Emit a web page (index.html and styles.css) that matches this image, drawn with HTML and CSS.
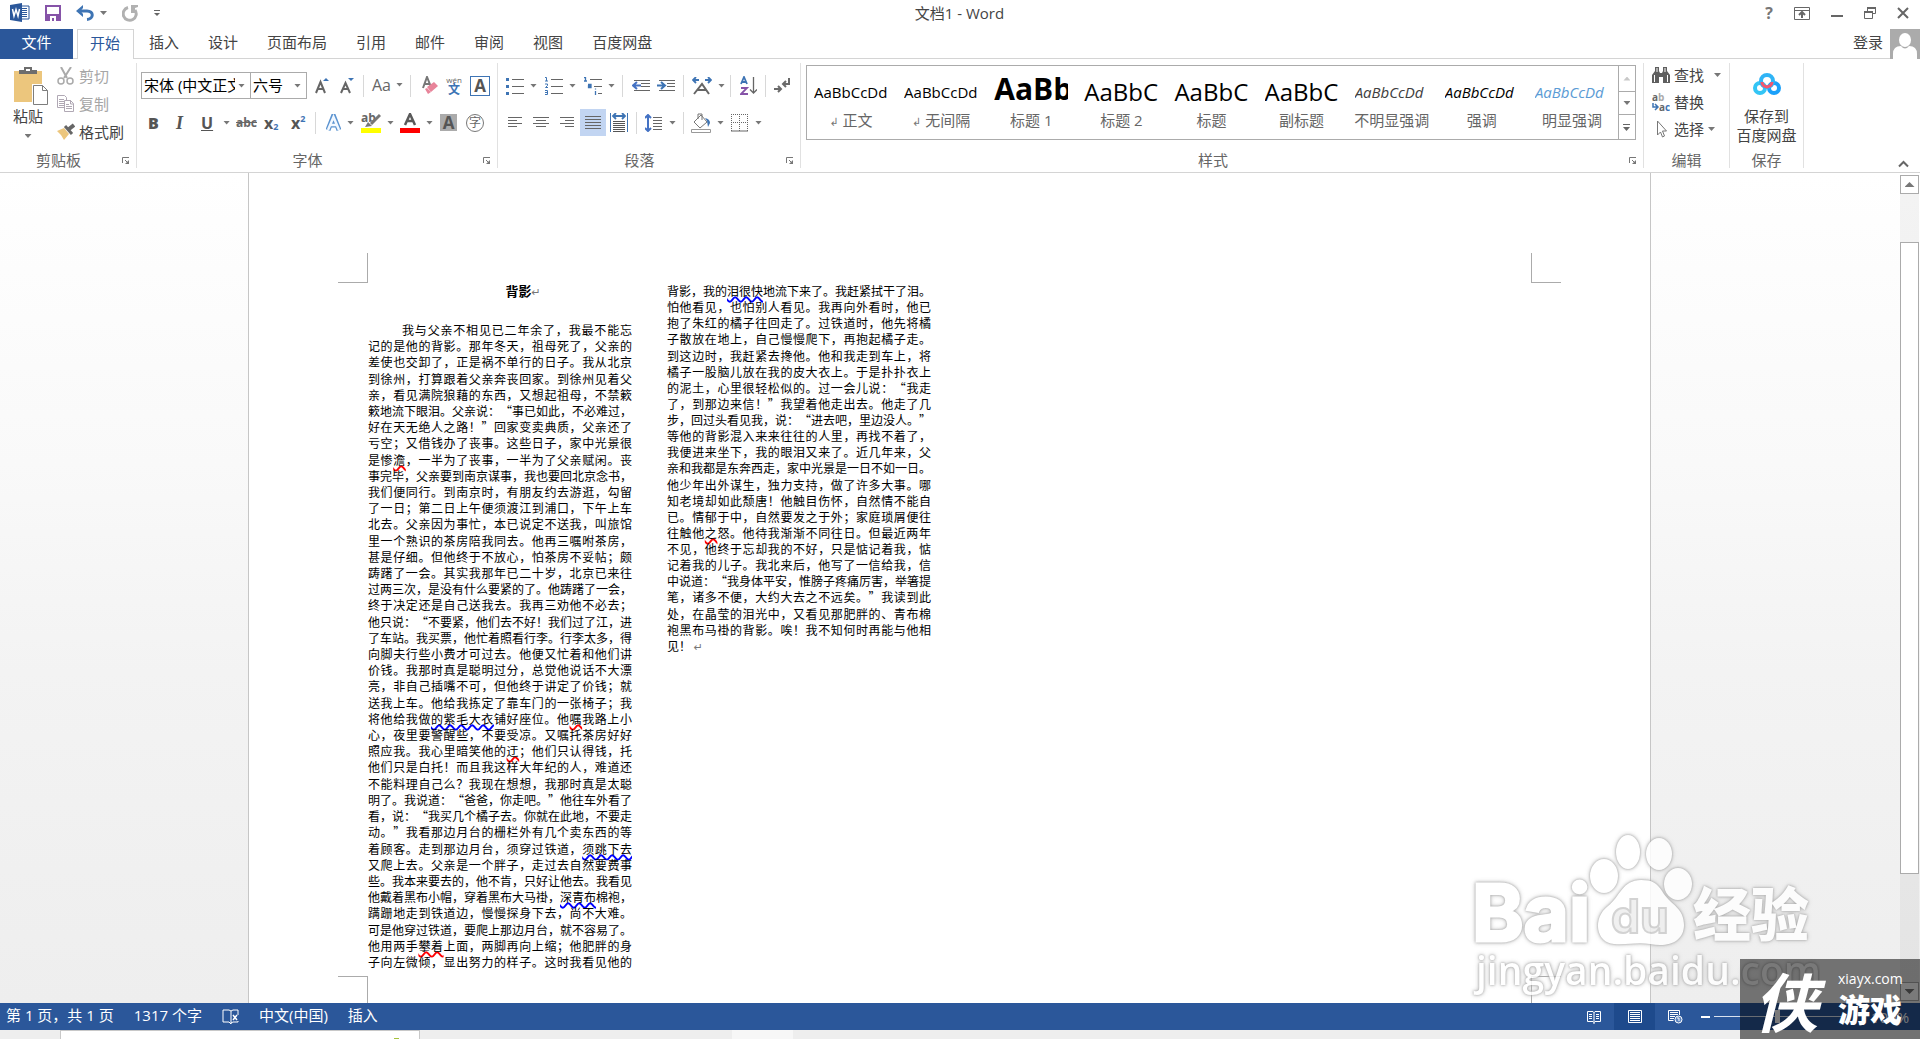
FILE: index.html
```html
<!DOCTYPE html>
<html lang="zh-CN">
<head>
<meta charset="utf-8">
<title>文档1 - Word</title>
<link rel="stylesheet" href="styles.css">
</head>
<body>
<header class="titlebar">
  <div class="quick">
    <svg width="20" height="20" viewBox="0 0 20 20"><path d="M11 3h8v13h-8z" fill="#fff" stroke="#2b579a"/><path d="M12 5.500h5M12 7.500h5M12 9.500h5M12 11.500h5M12 13.500h5" stroke="#2b579a"/><path d="M0 2l12-2v19L0 17z" fill="#2b579a"/><path d="M2.500 6l1.500 7 2-6.500 2 6.500 1.500-7" fill="none" stroke="#fff" stroke-width="1.500"/></svg>
    <button class="tool" aria-label="保存"><svg width="16" height="16" viewBox="0 0 16 16"><path d="M1 1h14v14H1z" fill="none" stroke="#8653a8" stroke-width="2"/><path d="M1 9h14v6H1z" fill="#8653a8"/><path d="M5 11h6v5H5z" fill="#fff"/><path d="M7 13h2v3H7z" fill="#8653a8"/></svg></button>
    <button class="tool" aria-label="撤消"><svg width="18" height="16" viewBox="0 0 18 16"><path d="M3 6h8c7 0 7 8 0 8.500" fill="none" stroke="#3e74b4" stroke-width="3"/><path d="M0 6l7-6v3L4.500 6 7 9v3z" fill="#3e74b4"/></svg><i class="caret"></i></button>
    <button class="tool" aria-label="恢复"><svg width="17" height="17" viewBox="0 0 17 17"><path d="M6 2.500A6.500 6.500 0 1 0 13 5" fill="none" stroke="#b1b1b1" stroke-width="3"/><path d="M9 0h7v2l-3 1v5H9z" fill="#b1b1b1"/></svg></button>
    <button class="tool" aria-label="自定义快速访问工具栏"><svg width="6" height="7" viewBox="0 0 6 7"><path d="M0 .5h6" stroke="#666"/><path d="M0 3h6L3 6z" fill="#666"/></svg></button>
  </div>
  <h1>文档1 - Word</h1>
  <div class="window">
    <button class="tool help" aria-label="帮助">?</button>
    <button class="tool" aria-label="功能区显示选项"><svg width="16" height="13" viewBox="0 0 16 13"><path d="M.5.500h15v12H.5zM.5 3.500h15" fill="none" stroke="#666"/><path d="M8 11V5M5 8l3-3 3 3" fill="none" stroke="#666" stroke-width="2"/></svg></button>
    <button class="tool" aria-label="最小化"><svg width="12" height="12" viewBox="0 0 12 12"><path d="M0 9h12" stroke="#666" stroke-width="2"/></svg></button>
    <button class="tool" aria-label="还原"><svg width="12" height="12" viewBox="0 0 12 12"><path d="M3.500 4V.5h8v6H8.500M.5 4.500h8v7h-8z" fill="none" stroke="#666"/><path d="M3 1h9M0 5h9" stroke="#666" stroke-width="2"/></svg></button>
    <button class="tool" aria-label="关闭"><svg width="12" height="12" viewBox="0 0 12 12"><path d="M1 1l10 10M11 1L1 11" stroke="#666" stroke-width="2"/></svg></button>
  </div>
</header>
<nav class="tabs">
  <button class="file">文件</button>
  <button class="tab active">开始</button>
  <button class="tab">插入</button>
  <button class="tab">设计</button>
  <button class="tab">页面布局</button>
  <button class="tab">引用</button>
  <button class="tab">邮件</button>
  <button class="tab">审阅</button>
  <button class="tab">视图</button>
  <button class="tab">百度网盘</button>
  <a class="login" href="#">登录</a>
  <svg width="30" height="30" viewBox="0 0 30 30"><path d="M0 0h30v30H0z" fill="#ababab"/><ellipse cx="15" cy="11" rx="6" ry="7" fill="#fff"/><path d="M3 30v-5q0-8 8-8 4 5 8 0 8 0 8 8v5z" fill="#fff"/></svg>
</nav>

<section class="ribbon">
  <div class="group">
    <div class="clipboard">
      <button class="big">
        <svg width="36" height="39" viewBox="0 0 36 39"><path d="M1 4h28v31H1z" fill="#ecc67d"/><path d="M6 7V3h5V0h8v3h5v4z" fill="#6d6d6d"/><path d="M13 2h4v2h-4z" fill="#fff"/><path d="M19 17h17v22H19z" fill="#fff"/><path d="M20.500 18.500h9l5 5v14h-14z" fill="#fff" stroke="#7d7d7d"/><path d="M29.500 18.500v5h5" fill="none" stroke="#7d7d7d"/></svg>
        <span>粘贴</span><i class="caret"></i>
      </button>
      <div class="stack">
        <button class="item off"><svg width="18" height="18" viewBox="0 0 18 18"><path d="M4 0l6 11M14 0L7 11" stroke="#aaa" stroke-width="2"/><circle cx="4" cy="14" r="3" fill="none" stroke="#aaa" stroke-width="1.500"/><circle cx="13" cy="14" r="3" fill="none" stroke="#aaa" stroke-width="1.500"/></svg>剪切</button>
        <button class="item off"><svg width="18" height="18" viewBox="0 0 18 18"><path d="M.5.500h7l2 2v10h-9z" fill="#fff" stroke="#b0a8b4"/><path d="M2 4.500h5M2 6.500h5M2 8.500h5M2 10.500h5" stroke="#b0a8b4"/><path d="M7.500 5.500h6l3 3v8h-9z" fill="#fff" stroke="#b0a8b4"/><path d="M13.500 5v4h3M9 9.500h3M9 11.500h6M9 13.500h6" fill="none" stroke="#b0a8b4"/></svg>复制</button>
        <button class="item"><svg width="18" height="18" viewBox="0 0 18 18"><path d="M0 8l7-3 5 6-5 6q-2-5-7-9" fill="#ecc67d"/><path d="M8 3l7 8" stroke="#666" stroke-width="3"/><path d="M12 6l5-4" stroke="#666" stroke-width="4"/></svg>格式刷</button>
      </div>
    </div>
    <footer><span>剪贴板</span><svg class="launch" width="8" height="8" viewBox="0 0 8 8"><path d="M.5 6V.5H7" fill="none" stroke="#777"/><path d="M3 3l3 3" stroke="#777"/><path d="M7 3v4H3z" fill="#777"/></svg></footer>
  </div>

  <div class="group">
    <div class="rows">
      <div class="row font-top">
        <span class="combo"><select aria-label="字体"><option>宋体 (中文正文)</option></select><i class="caret"></i></span>
        <span class="combo size"><select aria-label="字号"><option>六号</option></select><i class="caret"></i></span>
        <button class="tool" aria-label="增大字号"><svg width="15" height="18" viewBox="0 0 15 18"><path d="M1 16L5.500 5 10 16M3 12h5" fill="none" stroke="#666" stroke-width="2"/><path d="M8 4h6l-3-3z" fill="#3e74b4"/></svg></button>
        <button class="tool" aria-label="减小字号"><svg width="15" height="18" viewBox="0 0 15 18"><path d="M1 16L5.500 6 10 16M3 12h5" fill="none" stroke="#666" stroke-width="2"/><path d="M8 1h6l-3 3z" fill="#3e74b4"/></svg></button>
        <i class="sep"></i>
        <button class="tool latin">Aa<i class="caret"></i></button>
        <i class="sep"></i>
        <button class="tool" aria-label="清除格式"><svg width="16" height="19" viewBox="0 0 16 19"><path d="M1 12L5 1l4 10M2 8h6" fill="none" stroke="#777" stroke-width="2"/><path d="M5 11l7-5 4 4-7 6z" fill="#e8849a"/><path d="M3 13l2-1 4 4-3 2z" fill="#e8849a"/></svg></button>
        <button class="tool pinyin" aria-label="拼音指南"><span>wén</span><b>文</b></button>
        <button class="tool boxed">A</button>
      </div>
      <div class="row font-bottom">
        <button class="tool glyph"><b>B</b></button>
        <button class="tool glyph serif"><em>I</em></button>
        <button class="tool glyph"><u>U</u><i class="caret"></i></button>
        <button class="tool strike"><s>abc</s></button>
        <button class="tool script">x<sub>2</sub></button>
        <button class="tool script">x<sup>2</sup></button>
        <i class="sep"></i>
        <button class="tool" aria-label="文本效果"><svg width="15" height="18" viewBox="0 0 15 18"><path d="M2 16L7.500 2 13 16M4 11h7" fill="none" stroke="#5b93d0" stroke-width="5"/><path d="M2 16L7.500 3 13 16M4 11h7" fill="none" stroke="#f2f8ff" stroke-width="2.500"/></svg><i class="caret"></i></button>
        <button class="tool" aria-label="突出显示"><svg width="20" height="20" viewBox="0 0 20 20"><text x="0" y="9" class="ab">ab</text><path d="M19 2L10 11" stroke="#777" stroke-width="3"/><path d="M4 14l3-5 4 4z" fill="#777"/><path d="M0 15h20v5H0z" fill="#ff0"/></svg><i class="caret"></i></button>
        <button class="tool" aria-label="字体颜色"><svg width="20" height="20" viewBox="0 0 20 20"><path d="M5 12L10 1l5 11M7 8h6" fill="none" stroke="#5a5a5a" stroke-width="2.500"/><path d="M0 15h20v5H0z" fill="red"/></svg><i class="caret"></i></button>
        <button class="tool shaded">A</button>
        <button class="tool ring">字</button>
      </div>
    </div>
    <footer><span>字体</span><svg class="launch" width="8" height="8" viewBox="0 0 8 8"><path d="M.5 6V.5H7" fill="none" stroke="#777"/><path d="M3 3l3 3" stroke="#777"/><path d="M7 3v4H3z" fill="#777"/></svg></footer>
  </div>

  <div class="group">
    <div class="rows">
      <div class="row para-top">
        <button class="tool" aria-label="项目符号"><svg width="18" height="18" viewBox="0 0 18 18"><path d="M6 2.500h12M6 9.500h12M6 16.500h12" stroke="#666"/><path d="M0 1h3v3H0zM0 8h3v3H0zM0 15h3v3H0z" fill="#3e74b4"/></svg><i class="caret"></i></button>
        <button class="tool" aria-label="编号"><svg width="18" height="18" viewBox="0 0 18 18"><path d="M6 2.500h12M6 9.500h12M6 16.500h12" stroke="#666"/><path d="M0 .5h1.500V4M0 4h3M0 7h2.500v1.500L.5 10.500H3M0 13.500h2.500v4H0M0 15.500h2" fill="none" stroke="#3e74b4"/></svg><i class="caret"></i></button>
        <button class="tool" aria-label="多级列表"><svg width="18" height="18" viewBox="0 0 18 18"><path d="M6 2.500h12M10 9.500h8M14 16.500h4" stroke="#666"/><path d="M0 .5h1.500V4M0 4h3M4 7.500h3v3H4.500V9H7M11.500 14v4M11.500 11.500v1" fill="none" stroke="#3e74b4" stroke-width="1.300"/></svg><i class="caret"></i></button>
        <i class="sep"></i>
        <button class="tool" aria-label="减少缩进量"><svg width="18" height="12" viewBox="0 0 18 12"><path d="M2 .5h16M9 3.500h9M9 6.500h9M2 10.500h16" stroke="#666"/><path d="M2 5.500h7M5 2L1 5.500 5 9" fill="none" stroke="#4472c4" stroke-width="2"/></svg></button>
        <button class="tool" aria-label="增加缩进量"><svg width="18" height="12" viewBox="0 0 18 12"><path d="M2 .5h16M10 3.500h8M10 6.500h8M2 10.500h16" stroke="#666"/><path d="M0 5.500h7M4 2l4 3.500L4 9" fill="none" stroke="#3e74b4" stroke-width="2"/></svg></button>
        <i class="sep"></i>
        <button class="tool" aria-label="中文版式"><svg width="20" height="18" viewBox="0 0 20 18"><path d="M2 17l8-10 7 10M5 13h9" fill="none" stroke="#666" stroke-width="2"/><path d="M1 3h6M4 0L1 3l3 3M19 3h-6M16 0l3 3-3 3" fill="none" stroke="#3e74b4" stroke-width="1.800"/></svg><i class="caret"></i></button>
        <i class="sep"></i>
        <button class="tool" aria-label="排序"><svg width="17" height="19" viewBox="0 0 17 19"><path d="M1 8l3-7 3 7M2 6h4" fill="none" stroke="#3e74b4" stroke-width="1.800"/><path d="M1 12h6l-6 6h7" fill="none" stroke="#8653a8" stroke-width="1.800"/><path d="M13.500 1v16M10 13.500l3.500 3.500 3.500-3.500" fill="none" stroke="#666" stroke-width="1.300"/></svg></button>
        <i class="sep"></i>
        <button class="tool" aria-label="显示编辑标记"><svg width="17" height="15" viewBox="0 0 17 15"><path d="M15 0v6H9M12 3L9 6l3 3M0 11h7M4 8l3 3-3 3" fill="none" stroke="#6a6a6a" stroke-width="2"/></svg></button>
      </div>
      <div class="row para-bottom">
        <button class="tool" aria-label="左对齐"><svg width="16" height="12" viewBox="0 0 16 12"><path d="M1 .5h14M1 3.500h9M1 6.500h14M1 9.500h9" stroke="#666"/></svg></button>
        <button class="tool" aria-label="居中"><svg width="16" height="12" viewBox="0 0 16 12"><path d="M0 .5h16M3 3.500h10M0 6.500h16M3 9.500h10" stroke="#666"/></svg></button>
        <button class="tool" aria-label="右对齐"><svg width="17" height="12" viewBox="0 0 17 12"><path d="M3 .5h14M8 3.500h9M3 6.500h14M8 9.500h9" stroke="#666"/></svg></button>
        <button class="tool chosen" aria-label="两端对齐"><svg width="16" height="14" viewBox="0 0 16 14"><path d="M0 .5h16M0 3.500h16M0 6.500h16M0 9.500h16M0 12.500h16" stroke="#666"/></svg></button>
        <button class="tool" aria-label="分散对齐"><svg width="18" height="19" viewBox="0 0 18 19"><path d="M.5 0v19M17.500 0v19" stroke="#3e74b4"/><path d="M3 3h12M6 0L3 3l3 3M12 0l3 3-3 3" fill="none" stroke="#3e74b4" stroke-width="1.800"/><path d="M3 8.500h12M3 10.500h12M3 12.500h12M3 14.500h12M3 16.500h12M3 18.500h12" stroke="#555"/></svg></button>
        <i class="sep"></i>
        <button class="tool" aria-label="行距"><svg width="18" height="18" viewBox="0 0 18 18"><path d="M8 3.500h9M8 6.500h9M8 9.500h9M8 12.500h9M8 15.500h9" stroke="#666"/><path d="M3 1v16M0 4l3-3 3 3M0 14l3 3 3-3" fill="none" stroke="#4472c4" stroke-width="2"/></svg><i class="caret"></i></button>
        <i class="sep"></i>
        <button class="tool" aria-label="底纹"><svg width="20" height="20" viewBox="0 0 20 20"><path d="M3 9l7-7 6 7-7 6z" fill="#fff" stroke="#777"/><path d="M7 6V1h4v6" fill="none" stroke="#777"/><path d="M14 5q5 1 5 5l-2 4-1-6z" fill="#3e74b4"/><path d="M.5 16.500h19v3H.5z" fill="#fff" stroke="#999"/></svg><i class="caret"></i></button>
        <button class="tool" aria-label="边框"><svg width="18" height="18" viewBox="0 0 18 18"><path d="M.5 0v17M8.500 0v17M16.500 0v17M0 .5h17M0 8.500h17" stroke="#666" stroke-dasharray="1 1"/><path d="M0 17h17" stroke="#666"/></svg><i class="caret"></i></button>
      </div>
    </div>
    <footer><span>段落</span><svg class="launch" width="8" height="8" viewBox="0 0 8 8"><path d="M.5 6V.5H7" fill="none" stroke="#777"/><path d="M3 3l3 3" stroke="#777"/><path d="M7 3v4H3z" fill="#777"/></svg></footer>
  </div>

  <div class="group styles">
    <div class="gallery">
      <button class="style"><span>AaBbCcDd</span><small><i class="mark">↲</i> 正文</small></button>
      <button class="style"><span>AaBbCcDd</span><small><i class="mark">↲</i> 无间隔</small></button>
      <button class="style h1"><span>AaBb</span><small>标题 1</small></button>
      <button class="style h2"><span>AaBbC</span><small>标题 2</small></button>
      <button class="style h2"><span>AaBbC</span><small>标题</small></button>
      <button class="style h2"><span>AaBbC</span><small>副标题</small></button>
      <button class="style em soft"><span>AaBbCcDd</span><small>不明显强调</small></button>
      <button class="style em"><span>AaBbCcDd</span><small>强调</small></button>
      <button class="style em blue"><span>AaBbCcDd</span><small>明显强调</small></button>
      <div class="pager">
        <button aria-label="上一行" class="dim"><i class="caret up"></i></button>
        <button aria-label="下一行"><i class="caret"></i></button>
        <button aria-label="其他"><svg width="7" height="7" viewBox="0 0 7 7"><path d="M0 .5h7" stroke="#666"/><path d="M0 3h7L3.500 7z" fill="#666"/></svg></button>
      </div>
    </div>
    <footer><span>样式</span><svg class="launch" width="8" height="8" viewBox="0 0 8 8"><path d="M.5 6V.5H7" fill="none" stroke="#777"/><path d="M3 3l3 3" stroke="#777"/><path d="M7 3v4H3z" fill="#777"/></svg></footer>
  </div>

  <div class="group plain">
    <div class="stack">
      <button class="item"><svg width="18" height="18" viewBox="0 0 18 18"><path d="M0 9l3-4V1h4v4l1 2h2l1-2V1h4v4l3 4v8h-7v-6H7v6H0z" fill="#5f5f5f"/><path d="M2.500 9v7M15.500 9v7M5 2v4M13 2v4" stroke="#fff"/></svg>查找<i class="caret wide"></i></button>
      <button class="item"><svg width="18" height="19" viewBox="0 0 18 19"><text x="0" y="8" class="ab small">a<tspan fill="#aaa">b</tspan></text><text x="7" y="18" class="ab small">a<tspan fill="#3e74b4">c</tspan></text><path d="M1 10v4h5M3 11l3 3-3 3" fill="none" stroke="#3e74b4" stroke-width="1.500"/></svg>替换</button>
      <button class="item"><svg width="18" height="18" viewBox="0 0 18 18"><path d="M5.500 1v14l3-3 2 5 2-1-2-5h4z" fill="#fff" stroke="#777"/></svg>选择<i class="caret"></i></button>
    </div>
    <footer><span>编辑</span></footer>
  </div>

  <div class="group plain save">
    <button class="big">
      <svg width="28" height="22" viewBox="0 0 28 22"><circle cx="7" cy="15" r="5" fill="none" stroke="#33c5f5" stroke-width="4"/><circle cx="21" cy="15" r="5" fill="none" stroke="#1aa0fa" stroke-width="4"/><circle cx="14" cy="8" r="6" fill="none" stroke="#2fb4f6" stroke-width="4"/><path d="M9 9q0 4 5 5 5-1 5-5" fill="none" stroke="#f4566e" stroke-width="3"/></svg>
      <span>保存到<br>百度网盘</span>
    </button>
    <footer><span>保存</span></footer>
  </div>
  <button class="tool collapse" aria-label="折叠功能区"><svg width="11" height="8" viewBox="0 0 11 8"><path d="M1 6.500L5.500 2 10 6.500" fill="none" stroke="#666" stroke-width="2"/></svg></button>
</section>

<main class="desk">
  <article class="page">
    <div class="frame">
      <i class="corner tl"></i><i class="corner tr"></i><i class="corner bl"></i><i class="corner br"></i>
      <div class="column">
        <h2>背影<i class="mark">↵</i></h2>
        <p class="lines first">
          <span class="indent">我与父亲不相见已二年余了，我最不能忘</span>
          <span>记的是他的背影。那年冬天，祖母死了，父亲的</span>
          <span>差使也交卸了，正是祸不单行的日子。我从北京</span>
          <span>到徐州，打算跟着父亲奔丧回家。到徐州见着父</span>
          <span>亲，看见满院狼藉的东西，又想起祖母，不禁簌</span>
          <span>簌地流下眼泪。父亲说：“事已如此，不必难过，</span>
          <span>好在天无绝人之路！”回家变卖典质，父亲还了</span>
          <span>亏空；又借钱办了丧事。这些日子，家中光景很</span>
          <span>是惨<u class="spell">澹</u>，一半为了丧事，一半为了父亲赋闲。丧</span>
          <span>事完毕，父亲要到南京谋事，我也要回北京念书，</span>
          <span>我们便同行。到南京时，有朋友约去游逛，勾留</span>
          <span>了一日；第二日上午便须渡江到浦口，下午上车</span>
          <span>北去。父亲因为事忙，本已说定不送我，叫旅馆</span>
          <span>里一个熟识的茶房陪我同去。他再三嘱咐茶房，</span>
          <span>甚是仔细。但他终于不放心，怕茶房不妥帖；颇</span>
          <span>踌躇了一会。其实我那年已二十岁，北京已来往</span>
          <span>过两三次，是没有什么要紧的了。他踌躇了一会，</span>
          <span>终于决定还是自己送我去。我再三劝他不必去；</span>
          <span>他只说：“不要紧，他们去不好！我们过了江，进</span>
          <span>了车站。我买票，他忙着照看行李。行李太多，得</span>
          <span>向脚夫行些小费才可过去。他便又忙着和他们讲</span>
          <span>价钱。我那时真是聪明过分，总觉他说话不大漂</span>
          <span>亮，非自己插嘴不可，但他终于讲定了价钱；就</span>
          <span>送我上车。他给我拣定了靠车门的一张椅子；我</span>
          <span>将他给我做<u class="grammar">的紫毛大衣</u>铺好座位。他<u class="spell">嘱</u>我路上小</span>
          <span>心，夜里要警醒些，不要受凉。又嘱托茶房好好</span>
          <span>照应我。我心里暗笑他的<u class="spell">迂</u>；他们只认得钱，托</span>
          <span>他们只是白托！而且我这样大年纪的人，难道还</span>
          <span>不能料理自己么？我现在想想，我那时真是太聪</span>
          <span>明了。我说道：“爸爸，你走吧。”他往车外看了</span>
          <span>看，说：“我买几个橘子去。你就在此地，不要走</span>
          <span>动。”我看那边月台的栅栏外有几个卖东西的等</span>
          <span>着顾客。走到那边月台，须穿过铁道，<u class="grammar">须跳下去</u></span>
          <span>又爬上去。父亲是一个胖子，走过去自然要费事</span>
          <span>些。我本来要去的，他不肯，只好让他去。我看见</span>
          <span>他戴着黑布小帽，穿着黑布大马褂，<u class="grammar">深青布</u>棉袍，</span>
          <span>蹒跚地走到铁道边，慢慢探身下去，尚不大难。</span>
          <span>可是他穿过铁道，要爬上那边月台，就不容易了。</span>
          <span>他用两手<u class="spell">攀着</u>上面，两脚再向上缩；他肥胖的身</span>
          <span>子向左微倾，显出努力的样子。这时我看见他的</span>
        </p>
      </div>
      <div class="column">
        <p class="lines second">
          <span>背影，我的<u class="grammar">泪很快</u>地流下来了。我赶紧拭干了泪。</span>
          <span>怕他看见，也怕别人看见。我再向外看时，他已</span>
          <span>抱了朱红的橘子往回走了。过铁道时，他先将橘</span>
          <span>子散放在地上，自己慢慢爬下，再抱起橘子走。</span>
          <span>到这边时，我赶紧去搀他。他和我走到车上，将</span>
          <span>橘子一股脑儿放在我的皮大衣上。于是扑扑衣上</span>
          <span>的泥土，心里很轻松似的。过一会儿说：“我走</span>
          <span>了，到那边来信！”我望着他走出去。他走了几</span>
          <span>步，回过头看见我，说：“进去吧，里边没人。”</span>
          <span>等他的背影混入来来往往的人里，再找不着了，</span>
          <span>我便进来坐下，我的眼泪又来了。近几年来，父</span>
          <span>亲和我都是东奔西走，家中光景是一日不如一日。</span>
          <span>他少年出外谋生，独力支持，做了许多大事。哪</span>
          <span>知老境却如此颓唐！他触目伤怀，自然情不能自</span>
          <span>已。情郁于中，自然要发之于外；家庭琐屑便往</span>
          <span>往触他<u class="spell">之</u>怒。他待我渐渐不同往日。但最近两年</span>
          <span>不见，他终于忘却我的不好，只是惦记着我，惦</span>
          <span>记着我的儿子。我北来后，他写了一信给我，信</span>
          <span>中说道：“我身体平安，惟膀子疼痛厉害，举箸提</span>
          <span>笔，诸多不便，大约大去之不远矣。”我读到此</span>
          <span>处，在晶莹的泪光中，又看见那肥胖的、青布棉</span>
          <span>袍黑布马褂的背影。唉！我不知何时再能与他相</span>
          <span class="end">见！ <i class="mark">↵</i></span>
        </p>
      </div>
    </div>
  </article>
  <div class="scroll">
    <button aria-label="向上滚动"><i class="caret up big-caret"></i></button>
    <div class="track"><div class="thumb"></div></div>
    <button aria-label="向下滚动"><i class="caret big-caret"></i></button>
  </div>
</main>

<footer class="status">
  <span>第 1 页，共 1 页</span>
  <span>1317 个字</span>
  <svg width="17" height="16" viewBox="0 0 17 16"><path d="M9 2L7 1H1v12h6l2 2V2l2-1h5v5M9 14l2-1h5v-1" fill="none" stroke="#fff"/><path d="M11 6l4 5M15 6l-4 5" stroke="#fff" stroke-width="1.500"/></svg>
  <span>中文(中国)</span>
  <span>插入</span>
  <div class="views">
    <button class="view" aria-label="阅读视图"><svg width="14" height="14" viewBox="0 0 14 14"><path d="M.5 1.500H6l1 1 1-1h5.500v10H8l-1 1-1-1H.5zM7 2v12M2 4.500h3M2 6.500h3M2 8.500h3M9 4.500h3M9 6.500h3M9 8.500h3" fill="none" stroke="#fff"/></svg></button>
    <button class="view on" aria-label="页面视图"><svg width="14" height="14" viewBox="0 0 14 14"><path d="M.5.500h13v12H.5zM2 2.500h10M2 4.500h10M2 6.500h10M2 8.500h10M2 10.500h10" fill="none" stroke="#fff"/></svg></button>
    <button class="view" aria-label="Web 版式视图"><svg width="15" height="14" viewBox="0 0 15 14"><path d="M11.500 5V.5H.5v10h5M2 2.500h8M2 4.500h8M2 6.500h5M2 8.500h4" fill="none" stroke="#fff"/><circle cx="10.500" cy="9.500" r="3.500" fill="#5b83bd" stroke="#fff"/><path d="M9 8h2v3" stroke="#fff" fill="none"/></svg></button>
    <button class="minus" aria-label="缩小"><i></i></button>
    <input type="range" aria-label="缩放" min="0" max="100" value="49">
    <span class="percent">100%</span>
  </div>
</footer>
<div class="taskbar"><div class="window-tab"><i></i></div><div class="task-light"></div></div>

<div class="watermark">
  <svg width="350" height="170" viewBox="0 0 350 170">
    <g class="ghost">
      <text x="2" y="110" class="bai">Bai</text>
      <ellipse cx="134" cy="45" rx="14" ry="17"/><ellipse cx="158" cy="21" rx="12" ry="17"/><ellipse cx="189" cy="23" rx="13" ry="16"/><ellipse cx="208" cy="53" rx="14" ry="16"/>
      <path d="M171 49C152 49 150 66 138 75 122 87 126 112 144 113 158 114 166 111 180 113 199 117 214 110 214 94 214 76 200 74 192 60 187 52 182 49 171 49z"/>
      <text x="223" y="105" class="jy">经验</text>
      <text x="6" y="154" class="url">jingyan.baidu.com</text>
    </g>
    <text x="141" y="102" class="du">du</text>
  </svg>
</div>
<div class="stamp">
  <strong class="xia">侠</strong>
  <div><span>xiayx.com</span><strong>游戏</strong></div>
</div>
</body>
</html>
```
FILE: styles.css
```css
* { box-sizing: border-box; }
body {
  margin: 0;
  height: 100vh;
  display: flex;
  flex-direction: column;
  overflow: hidden;
  background: #fff;
  color: #444;
  font: 15px/20px "Open Sans", "Noto Sans CJK SC", sans-serif;
}
button, select, input { font: inherit; color: inherit; }
button { border: 0; padding: 0; background: none; white-space: nowrap; }
svg { display: block; flex: none; }
i { font-style: normal; }
h1, h2, p { margin: 0; font-weight: normal; }

.caret {
  flex: none;
  width: 7px;
  height: 4px;
  background: #777;
  clip-path: polygon(0 0, 100% 0, 50% 100%);
}
.caret.up { clip-path: polygon(0 100%, 100% 100%, 50% 0); }
.tool { display: flex; align-items: center; gap: 6px; }

/* title bar */
.titlebar {
  flex: none;
  height: 29px;
  display: grid;
  grid-template-columns: 1fr auto 1fr;
  align-items: center;
  padding: 0 11px 3px 10px;
}
.quick, .window { display: flex; align-items: center; gap: 15px; }
.window { justify-content: flex-end; gap: 21px; }
.titlebar h1 { font-size: 15px; }
.help { font-weight: bold; font-size: 16px; color: #777; }

/* tabs */
.tabs { flex: none; height: 30px; display: flex; border-bottom: 1px solid #d4d4d4; }
.tabs .file { width: 73px; height: 30px; margin-right: 4px; background: #2b579a; color: #fff; }
.tab { padding: 0 14px 4px 15px; }
.tabs .file { padding-bottom: 4px; }
.tab.active {
  height: 30px;
  padding: 0 13px 4px 12px;
  border: 1px solid #d4d4d4;
  border-bottom: 0;
  background: #fff;
  color: #2b579a;
}
.login { margin-left: auto; padding: 3px 7px 0 0; color: #444; text-decoration: none; }

/* ribbon */
.ribbon { flex: none; height: 114px; display: flex; padding: 4px 0; border-bottom: 1px solid #d4d4d4; }
.group {
  display: flex;
  flex-direction: column;
  justify-content: space-between;
  border-right: 1px solid #e1e1e1;
  padding-left: 4px;
}
.group footer { display: flex; height: 16px; margin-left: -4px; color: #666; line-height: 16px; align-items: flex-start; }
.group footer span { flex: 1; text-align: center; }
.group .launch { margin: 5px 6px 0 5px; }
.clipboard { display: flex; width: 132px; gap: 8px; }
.big { display: flex; flex-direction: column; align-items: center; }
.clipboard .big { padding: 4px 0 0 9px; }
.clipboard .big span { margin: 0 6px 8px 0; }
.clipboard .big .caret { margin-right: 6px; }
.stack { display: flex; flex-direction: column; }
.item { display: flex; align-items: center; gap: 4px; height: 28px; padding-bottom: 2px; }
.plain .item { height: 27px; padding-bottom: 3px; }
.item.off { color: #a6a6a6; }
.rows { display: flex; flex-direction: column; padding-top: 4px; }
.row { display: grid; align-items: center; height: 37px; }
.row .latin { font-size: 16px; color: #666; gap: 5px; padding-bottom: 2px; }
.font-top { grid-template-columns: 110px 64px 25px 23px 9px 38px 12px 24px 24px 27px; }
.font-bottom { grid-template-columns: 28px 25px 35px 28px 27px 24px 11px 35px 39px 40px 26px 24px; padding-left: 7px; }
.para-top { grid-template-columns: 39px 39px 38px 10px 25px 26px 9px 38px 10px 25px 9px 26px; padding-left: 4px; }
.para-bottom { grid-template-columns: 26px 24px 23px 30px 26px 9px 38px 8px 40px 35px; padding-left: 5px; justify-content: start; }
.sep { width: 1px; height: 22px; background: #d8d8d8; }
.combo { display: flex; align-items: center; height: 27px; border: 1px solid #ababab; padding-right: 5px; }
.combo.size { width: 56px; border-left: 0; }
.combo select {
  flex: 1;
  min-width: 0;
  height: 25px;
  padding: 0 3px 2px 2px;
  border: 0;
  appearance: none;
  background: none;
  color: #000;
  overflow: hidden;
}
.pinyin { flex-direction: column; gap: 0; color: #666; font-size: 8px; line-height: 8px; width: 16px; }
.pinyin b { font-size: 12px; line-height: 12px; color: #3e74b4; }
.boxed, .shaded { justify-content: center; width: 20px; height: 20px; border: 1px solid #3e74b4; font-weight: bold; font-size: 17px; color: #555; }
.shaded { width: 17px; height: 17px; border: 0; background: #ababab; }
.ring { justify-content: center; width: 18px; height: 18px; border: 1px solid #777; border-radius: 50%; font-size: 12px; color: #666; }
.glyph { font-weight: bold; font-size: 16px; color: #555; gap: 10px; }
.serif { font-family: "Liberation Serif", serif; font-size: 18px; }
.strike { font-size: 12px; font-weight: bold; color: #666; }
.script { gap: 0; font-weight: bold; font-size: 16px; color: #555; }
.script sub, .script sup { font-size: 9px; color: #3e74b4; align-self: flex-end; line-height: 12px; }
.script sup { align-self: flex-start; }
.ab { font: bold 12px "Open Sans", sans-serif; fill: #666; }
.ab.small { font-size: 10px; }
.chosen { width: 26px; height: 27px; justify-content: center; background: #c2d5f2; }

.styles { flex: 1; padding: 2px 0 0 5px; }
.gallery { display: flex; height: 75px; margin-right: 7px; border: 1px solid #ababab; }
.style { flex: 1; min-width: 0; padding: 0 9px 0 7px; display: flex; flex-direction: column; align-items: center; }
.style span { height: 44px; width: 100%; overflow: hidden; color: #000; line-height: 52px; text-align: left; font-size: 15px; }
.style small { font-size: 15px; line-height: 20px; color: #666; }
.style.h1 span { font-size: 30px; font-weight: bold; line-height: 46px; }
.style.h2 span { font-size: 24px; line-height: 52px; }
.style.em span { font-style: italic; }
.style.soft span { color: #404040; }
.style.blue span { color: #5b9bd5; }
.mark { font-size: 11px; color: #777; font-family: "DejaVu Sans", sans-serif; font-weight: normal; }
.pager { width: 17px; display: grid; grid-template-rows: 25px 23px 1fr; border-left: 1px solid #ababab; }
.pager button { display: grid; place-items: center; }
.pager button + button { border-top: 1px solid #ababab; }
.pager .dim { opacity: .4; }
.plain { width: 86px; padding-left: 8px; }
.plain footer { margin-left: -8px; }
.caret.wide { margin-left: 6px; }
.plain.save { width: 74px; padding: 0; }
.save .big { padding-top: 10px; gap: 12px; line-height: 19px; }
.save footer { margin: 0; }
.collapse { align-self: flex-end; margin: 0 11px 0 auto; width: 105px; justify-content: flex-end; }

/* document */
.desk {
  flex: 1;
  min-height: 0;
  display: flex;
  overflow: hidden;
  background: linear-gradient(#fff, #f9f9f9 35%, #f3f3f3 60%, #eee);
}
.page {
  flex: 1;
  margin: 0 269px 0 248px;
  padding: 109px 118px 0;
  background: #fff;
  border: 1px solid #c6c6c6;
  border-width: 0 1px;
}
.frame { position: relative; display: flex; gap: 35px; height: 695px; padding: 1px 0 0 1px; }
.corner { position: absolute; width: 30px; height: 30px; border: 0 solid #ababab; }
.tl { left: -29px; top: -29px; border-width: 0 1px 1px 0; }
.tr { right: -29px; top: -29px; border-width: 0 0 1px 1px; }
.bl { left: -29px; bottom: -29px; border-width: 1px 1px 0 0; }
.br { right: -29px; bottom: -29px; border-width: 1px 0 0 1px; }
.column { width: 264px; color: #000; font: 12px/16px "Noto Sans CJK SC", sans-serif; }
.column h2 { margin-bottom: 21px; padding-left: 46px; text-align: center; font-size: 13px; font-weight: bold; line-height: 16px; }
.lines { display: flex; flex-direction: column; justify-content: space-between; }
.first { height: 648px; }
.second { height: 373px; }
.lines span { display: block; white-space: nowrap; text-align: justify; text-align-last: justify; text-spacing-trim: space-all; }
.lines .indent { padding-left: 34px; }
.lines .end { text-align-last: left; }
.spell, .grammar { text-decoration: underline wavy 2px red; text-decoration-skip-ink: none; text-underline-offset: 0; }
.grammar { text-decoration-color: blue; }

.scroll { position: absolute; right: 1px; display: flex; flex-direction: column; width: 19px; top: 175px; bottom: 38px; }
.scroll button { display: grid; place-items: center; height: 19px; border: 1px solid #ababab; background: #fff; }
.big-caret { width: 10px; height: 5px; }
.track { flex: 1; background: linear-gradient(#f3f3f3, #e4e4e4); padding-top: 48px; }
.thumb { height: 632px; background: #fff; border: 1px solid #ababab; }

/* status bar and the strip under it */
.status { flex: none; display: flex; align-items: center; height: 27px; padding-left: 6px; gap: 20px; background: #2b579a; color: #fff; }
.status > span { padding-bottom: 4px; }
.views { margin-left: auto; display: flex; align-items: center; height: 27px; padding-right: 10px; }
.view { display: grid; place-items: center; width: 41px; height: 27px; }
.view.on { background: #1e4a8c; }
.minus { width: 9px; margin: 0 4px 0 5px; }
.minus i { display: block; height: 2px; background: #fff; }
.views input { width: 130px; height: 14px; margin: 0 27px 0 0; appearance: none; background: linear-gradient(#d9e2ef, #d9e2ef) center / 100% 1px no-repeat; }
.views input::-webkit-slider-thumb { appearance: none; width: 5px; height: 13px; background: #fff; }
.percent { width: 39px; }
.taskbar { flex: none; display: flex; height: 9px; padding-left: 60px; background: #eee; }
.window-tab { width: 360px; border: 1px solid #c8c8c8; border-bottom: 0; background: #fff; padding: 7px 0 0 333px; }
.window-tab i { display: block; width: 5px; height: 1px; background: #a5c23c; }
.task-light { width: 61px; margin-left: 312px; background: #f7f7f7; }

/* overlays */
.watermark { position: absolute; right: 100px; bottom: 38px; opacity: .85; pointer-events: none; }
.ghost { fill: #fff; filter: drop-shadow(0 0 1px #999) drop-shadow(0 0 2px #bbb); }
.bai { font: bold 78px Inter, sans-serif; stroke: #fff; stroke-width: 3px; }
.jy { font: 900 58px "Noto Sans CJK SC", sans-serif; }
.url { font: 600 39px "Open Sans", sans-serif; }
.du { font: bold 46px Inter, sans-serif; fill: #eee; stroke: #ccc; stroke-width: 2px; }
.stamp {
  position: absolute;
  right: 0;
  bottom: 0;
  width: 180px;
  height: 80px;
  display: flex;
  gap: 14px;
  padding-left: 14px;
  background: rgba(0, 0, 0, .52);
  color: #fff;
}
.xia { font: italic bold 64px/80px "Noto Sans CJK SC", sans-serif; width: 70px; }
.stamp div { display: flex; flex-direction: column; padding-top: 11px; font-size: 14px; line-height: 18px; }
.stamp div strong { font: 900 32px/40px "Noto Sans CJK SC", sans-serif; }
```
